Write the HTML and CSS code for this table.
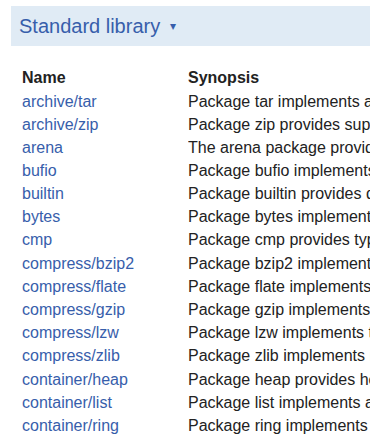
FILE: index.html
```html
<!DOCTYPE html>
<html lang="en">
<head>
  <meta charset="UTF-8">
  <meta name="viewport" content="width=device-width, initial-scale=1.0">
  <title>Standard library</title>
  <link rel="stylesheet" href="styles.css">
</head>
<body>
  <div class="section">
    <h2 class="toggle">Standard library <span class="arrow">▾</span></h2>
  </div>

  <div class="pkg-dir">
    <table>
      <colgroup>
        <col class="col-name">
        <col class="col-synopsis">
      </colgroup>
      <thead>
        <tr>
          <th>Name</th>
          <th>Synopsis</th>
        </tr>
      </thead>
      <tbody>
        <tr><td><a href="#">archive/tar</a></td><td>Package tar implements access to tar archives.</td></tr>
        <tr><td><a href="#">archive/zip</a></td><td>Package zip provides support for reading and writing ZIP archives.</td></tr>
        <tr><td><a href="#">arena</a></td><td>The arena package provides the ability to allocate memory.</td></tr>
        <tr><td><a href="#">bufio</a></td><td>Package bufio implements buffered I/O.</td></tr>
        <tr><td><a href="#">builtin</a></td><td>Package builtin provides documentation for Go's predeclared identifiers.</td></tr>
        <tr><td><a href="#">bytes</a></td><td>Package bytes implements functions for the manipulation of byte slices.</td></tr>
        <tr><td><a href="#">cmp</a></td><td>Package cmp provides types and functions related to comparing ordered values.</td></tr>
        <tr class="group"><td><a href="#">compress/bzip2</a></td><td>Package bzip2 implements bzip2 decompression.</td></tr>
        <tr><td><a href="#">compress/flate</a></td><td>Package flate implements the DEFLATE compressed data format.</td></tr>
        <tr><td><a href="#">compress/gzip</a></td><td>Package gzip implements reading and writing of gzip format compressed files.</td></tr>
        <tr><td><a href="#">compress/lzw</a></td><td>Package lzw implements the Lempel-Ziv-Welch compressed data format.</td></tr>
        <tr><td><a href="#">compress/zlib</a></td><td>Package zlib implements reading and writing of zlib format compressed data.</td></tr>
        <tr class="group"><td><a href="#">container/heap</a></td><td>Package heap provides heap operations for any type.</td></tr>
        <tr><td><a href="#">container/list</a></td><td>Package list implements a doubly linked list.</td></tr>
        <tr><td><a href="#">container/ring</a></td><td>Package ring implements operations on circular lists.</td></tr>
      </tbody>
    </table>
  </div>
</body>
</html>
```

FILE: styles.css
```css
body {
  font-family: Arial, "Liberation Sans", sans-serif;
  font-size: 16px;
  color: #222;
  margin: 0;
  padding: 6px 0 0 11px;
  overflow: hidden;
}

.section {
  background: #e0ebf5;
  height: 40px;
  display: flex;
  align-items: center;
  padding-left: 8px;
}

.toggle {
  margin: 0;
  font-size: 20px;
  font-weight: normal;
  color: #375eab;
  white-space: nowrap;
}

.arrow {
  font-size: 12px;
  margin-left: 4px;
  vertical-align: 3px;
}

.pkg-dir {
  padding: 19px 0 0 11px;
}

table {
  border-collapse: collapse;
  table-layout: fixed;
  width: 760px;
  white-space: nowrap;
}

.col-name {
  width: 166px;
}

th, td {
  padding: 0;
  text-align: left;
  line-height: 23px;
  overflow: hidden;
}

th {
  font-weight: bold;
  color: #222;
  line-height: 25px;
}

tr.group td {
  padding-top: 1px;
}

a {
  color: #375eab;
  text-decoration: none;
}
```
